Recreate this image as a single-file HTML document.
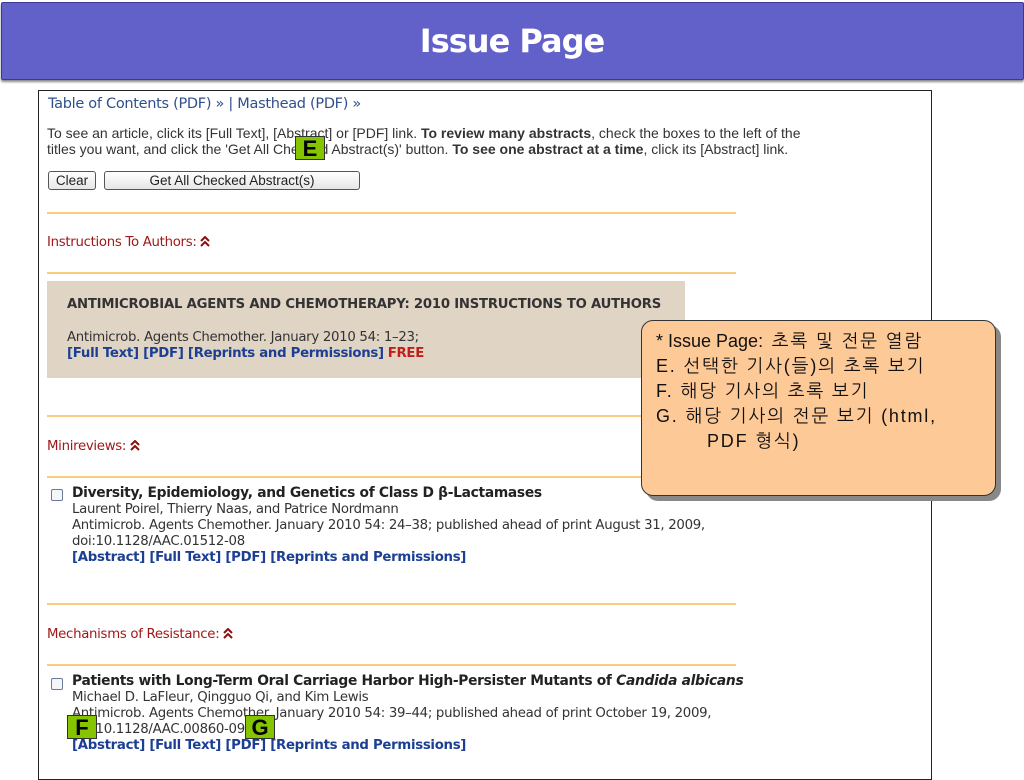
<!DOCTYPE html>
<html><head><meta charset="utf-8"><style>
*{margin:0;padding:0;box-sizing:border-box}
body{width:1024px;height:768px;background:#fff;position:relative;overflow:hidden;font-family:"DejaVu Sans",sans-serif}
.a{position:absolute;white-space:nowrap}
.hdr{left:1px;top:2px;width:1023px;height:78px;background:#6161c9;border:1px solid #3a3a90;border-radius:2px;box-shadow:0 2px 2px #888}
.ttl{left:0;width:1024px;top:22px;text-align:center;color:#fff;font:bold 32px "DejaVu Sans",sans-serif;letter-spacing:-1px}
.box{left:38px;top:90px;width:894px;height:690px;border:1px solid #222}
.t{font-size:13.3px;color:#333;font-family:"DejaVu Sans",sans-serif;letter-spacing:-0.3px}
.hr{position:absolute;left:47px;width:689px;height:2px;background:#f8cd80}
.sec{color:#a01818;font-size:13.3px;letter-spacing:-0.3px}
.blue{color:#1c3f94;font-weight:bold}
.btn{border:1px solid #555;border-radius:3px;background:linear-gradient(#fff,#e6e6e6);font:13.5px "Liberation Sans",sans-serif;color:#222;text-align:center;line-height:17px;height:19px}
.cb{width:12px;height:12px;border:1px solid #6a7a9a;background:#f4f6fa;border-radius:2px}
.lab{width:30px;height:24px;background:#86c400;border:1px solid #333;font:bold 22px "Liberation Sans",sans-serif;color:#000;text-align:center;line-height:24px}
.call{left:641px;top:320px;width:355px;height:176px;background:#fdc996;border:1px solid #333;border-radius:12px;box-shadow:5px 5px 0 #888}
.ct{font:18px "Liberation Sans","NanumGothic","Noto Sans CJK KR",sans-serif;color:#111;left:656px;letter-spacing:1.8px}
.ct b{font-weight:normal;letter-spacing:0}
svg{vertical-align:-1px}
</style></head><body>
<div class="a hdr"></div>
<div class="a ttl">Issue Page</div>
<div class="a box"></div>
<div class="a" style="left:48px;top:96px;font-size:14.5px;color:#30508c;letter-spacing:-0.3px">Table of Contents (PDF) » | Masthead (PDF) »</div>
<div class="a" style="left:47px;top:125px;font:14px 'Liberation Sans',sans-serif;color:#333;line-height:16px">To see an article, click its [Full Text], [Abstract] or [PDF] link. <b>To review many abstracts</b>, check the boxes to the left of the<br>titles you want, and click the 'Get All Checked Abstract(s)' button. <b>To see one abstract at a time</b>, click its [Abstract] link.</div>
<div class="a btn" style="left:48px;top:171px;width:48px">Clear</div>
<div class="a btn" style="left:104px;top:171px;width:256px">Get All Checked Abstract(s)</div>
<div class="hr" style="top:212px"></div>
<div class="a sec" style="left:47px;top:235px">Instructions To Authors: <svg width="10" height="11" viewBox="0 0 10 11"><path d="M1 5L5 1L9 5M1 10L5 6L9 10" fill="none" stroke="#8a1010" stroke-width="2"/></svg></div>
<div class="hr" style="top:272px"></div>
<div class="a" style="left:47px;top:281px;width:638px;height:97px;background:#e0d4c4"></div>
<div class="a" style="left:67px;top:297px;font-size:13.2px;font-weight:bold;color:#333;letter-spacing:-0.2px">ANTIMICROBIAL AGENTS AND CHEMOTHERAPY: 2010 INSTRUCTIONS TO AUTHORS</div>
<div class="a t" style="left:67px;top:330px">Antimicrob. Agents Chemother. January 2010 54: 1–23;</div>
<div class="a t" style="left:67px;top:346px"><span class="blue">[Full Text] [PDF] [Reprints and Permissions]</span> <b style="color:#c0201a">FREE</b></div>
<div class="hr" style="top:415px"></div>
<div class="a sec" style="left:47px;top:439px">Minireviews: <svg width="10" height="11" viewBox="0 0 10 11"><path d="M1 5L5 1L9 5M1 10L5 6L9 10" fill="none" stroke="#8a1010" stroke-width="2"/></svg></div>
<div class="hr" style="top:476px"></div>
<div class="a cb" style="left:51px;top:489px"></div>
<div class="a t" style="left:72px;top:485px;font-weight:bold;color:#222;font-size:13.8px">Diversity, Epidemiology, and Genetics of Class D β-Lactamases</div>
<div class="a t" style="left:72px;top:502px">Laurent Poirel, Thierry Naas, and Patrice Nordmann</div>
<div class="a t" style="left:72px;top:518px">Antimicrob. Agents Chemother. January 2010 54: 24–38; published ahead of print August 31, 2009,</div>
<div class="a t" style="left:72px;top:534px">doi:10.1128/AAC.01512-08</div>
<div class="a t blue" style="left:72px;top:550px">[Abstract] [Full Text] [PDF] [Reprints and Permissions]</div>
<div class="hr" style="top:603px"></div>
<div class="a sec" style="left:47px;top:627px">Mechanisms of Resistance: <svg width="10" height="11" viewBox="0 0 10 11"><path d="M1 5L5 1L9 5M1 10L5 6L9 10" fill="none" stroke="#8a1010" stroke-width="2"/></svg></div>
<div class="hr" style="top:664px"></div>
<div class="a cb" style="left:51px;top:678px"></div>
<div class="a t" style="left:72px;top:673px;font-weight:bold;color:#222;font-size:13.8px">Patients with Long-Term Oral Carriage Harbor High-Persister Mutants of <i>Candida albicans</i></div>
<div class="a t" style="left:72px;top:690px">Michael D. LaFleur, Qingguo Qi, and Kim Lewis</div>
<div class="a t" style="left:72px;top:706px">Antimicrob. Agents Chemother. January 2010 54: 39–44; published ahead of print October 19, 2009,</div>
<div class="a t" style="left:72px;top:722px">doi:10.1128/AAC.00860-09</div>
<div class="a t blue" style="left:72px;top:738px">[Abstract] [Full Text] [PDF] [Reprints and Permissions]</div>
<div class="a lab" style="left:295px;top:136px">E</div>
<div class="a lab" style="left:67px;top:715px">F</div>
<div class="a lab" style="left:245px;top:715px">G</div>
<div class="a call"></div>
<div class="a ct" style="top:330px"><b>* Issue Page</b>: 초록 및 전문 열람</div>
<div class="a ct" style="top:355px">E. 선택한 기사(들)의 초록 보기</div>
<div class="a ct" style="top:380px">F. 해당 기사의 초록 보기</div>
<div class="a ct" style="top:405px">G. 해당 기사의 전문 보기 (html,</div>
<div class="a ct" style="top:430px;left:707px">PDF 형식)</div>
</body></html>
